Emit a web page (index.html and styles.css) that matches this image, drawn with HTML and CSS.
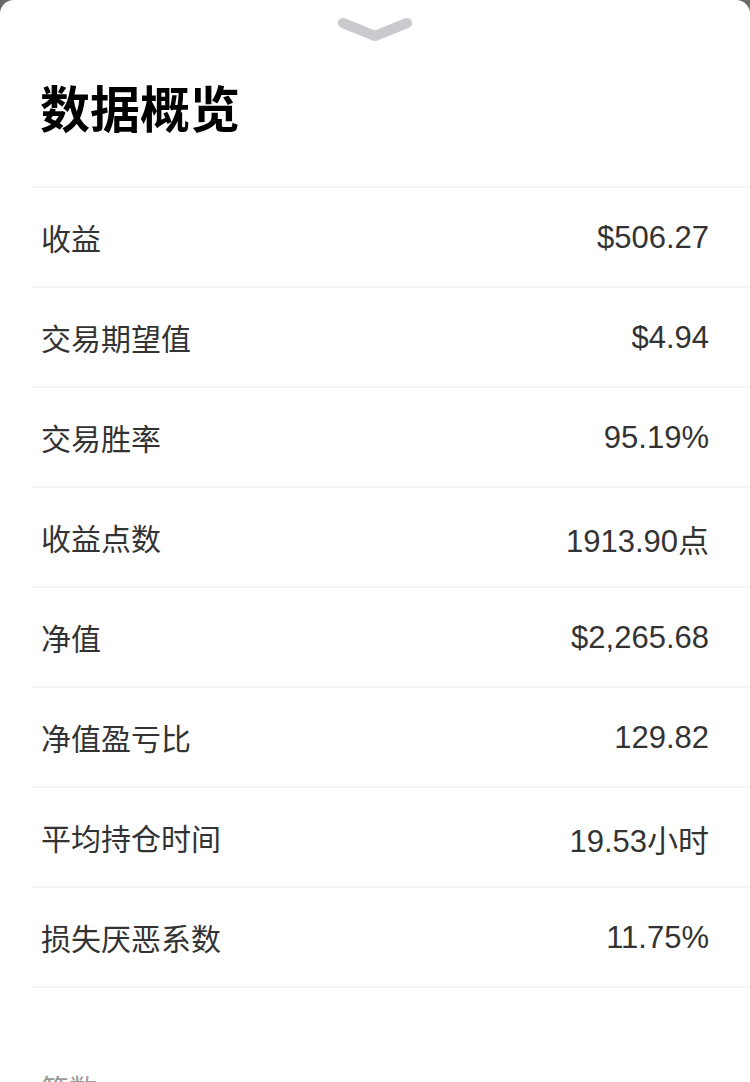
FILE: index.html
```html
<!DOCTYPE html>
<html lang="zh-CN">
<head>
<meta charset="utf-8">
<title>数据概览</title>
<link rel="stylesheet" href="styles.css">
</head>
<body>
<div class="sheet">
  <div class="handle">
    <svg width="74" height="26" viewBox="0 0 74 26"><path d="M5 6 L37 19 L69 6" fill="none" stroke="#c9c9ce" stroke-width="10" stroke-linecap="round" stroke-linejoin="round"/></svg>
  </div>
  <h1 class="title">数据概览</h1>
  <div class="list">
    <div class="row"><span class="label">收益</span><span class="value">$506.27</span></div>
    <div class="row"><span class="label">交易期望值</span><span class="value">$4.94</span></div>
    <div class="row"><span class="label">交易胜率</span><span class="value">95.19%</span></div>
    <div class="row"><span class="label">收益点数</span><span class="value">1913.90点</span></div>
    <div class="row"><span class="label">净值</span><span class="value">$2,265.68</span></div>
    <div class="row"><span class="label">净值盈亏比</span><span class="value">129.82</span></div>
    <div class="row"><span class="label">平均持仓时间</span><span class="value">19.53小时</span></div>
    <div class="row"><span class="label">损失厌恶系数</span><span class="value">11.75%</span></div>
  </div>
  <div class="section-label">笔数</div>
</div>
</body>
</html>
```
FILE: styles.css
```css
html, body {
  margin: 0;
  padding: 0;
}
body {
  background: #6a6a6a;
  font-family: "Liberation Sans", "Noto Sans CJK SC", sans-serif;
  width: 750px;
  height: 1082px;
  overflow: hidden;
}
.sheet {
  background: #ffffff;
  border-radius: 14px 14px 0 0;
  min-height: 1200px;
}
.handle {
  height: 60px;
  display: flex;
  justify-content: center;
  align-items: flex-start;
  padding-top: 17px;
  box-sizing: border-box;
}
.title {
  margin: 18px 0 52px 40px;
  font-family: "Noto Sans CJK SC", sans-serif;
  font-size: 50px;
  line-height: 56px;
  font-weight: 700;
  color: #000;
}
.list {
  margin-left: 32px;
  border-bottom: 2px solid #f4f4f4;
}
.row {
  height: 100px;
  box-sizing: border-box;
  border-top: 2px solid #f4f4f4;
  display: flex;
  align-items: center;
  justify-content: space-between;
  padding: 0 41px 0 9px;
}
.label {
  font-family: "Noto Sans CJK SC", sans-serif;
  font-size: 30px;
  color: #333;
}
.value {
  font-size: 31px;
  color: #333;
  padding-top: 2px;
}
.section-label {
  margin: 80px 0 0 41px;
  font-family: "Noto Sans CJK SC", sans-serif;
  font-size: 28px;
  color: #999;
}
```
